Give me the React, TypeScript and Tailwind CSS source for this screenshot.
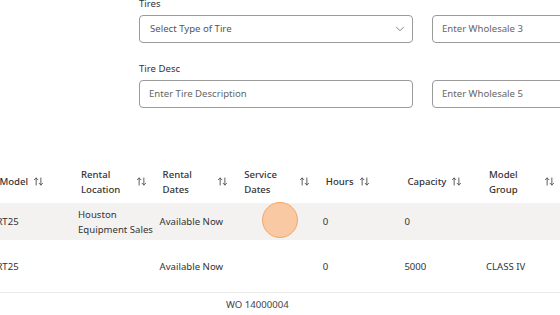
import { ChevronDown } from "lucide-react";

const cols = [
  { label: "Model" },
  { label: "Rental Location" },
  { label: "Rental Dates" },
  { label: "Service Dates" },
  { label: "Hours" },
  { label: "Capacity" },
  { label: "Model Group" },
];

const rows = [
  {
    cells: ["RT25", "Houston Equipment Sales", "Available Now", "", "0", "0", ""],
    className: "h-[37px] bg-[#f3f2f1]",
  },
  {
    cells: ["RT25", "", "Available Now", "", "0", "5000", "CLASS IV"],
    className: "h-[53px] border-b border-[#ebebeb]",
  },
];

function SortIcon() {
  return (
    <svg viewBox="0 0 14 14" className="w-[11px] h-[11px] shrink-0 text-[#555]" fill="none" stroke="currentColor" strokeWidth="1.2" strokeLinecap="round" strokeLinejoin="round">
      <path d="M4 2.5v9M1.8 4.7 4 2.5l2.2 2.2" />
      <path d="M10 2.5v9M7.8 9.3 10 11.5l2.2-2.2" />
    </svg>
  );
}

function Field({ label, children }: { label: string; children: React.ReactNode }) {
  return (
    <div className="flex flex-col">
      <div className="h-[15px] leading-[15px] mb-[4px] text-[#333]">{label}</div>
      {children}
    </div>
  );
}

function Input({ placeholder, width }: { placeholder: string; width: string }) {
  return (
    <div className={`${width} h-[28px] rounded-[4px] border border-[#9a9a9a] flex items-center pl-[9px] text-[#666]`}>
      {placeholder}
    </div>
  );
}

export default function App() {
  return (
    <div
      className="relative w-[560px] h-[315px] overflow-hidden bg-white text-[9.6px] text-[#333]"
      style={{ fontFamily: '"Noto Sans", "Open Sans", sans-serif' }}
    >
      <div className="-mt-[4px] pl-[139px] flex flex-col gap-[18px]">
        <div className="flex gap-[19px] items-end">
          <Field label="Tires">
            <div className="w-[274px] h-[28px] rounded-[4px] border border-[#9a9a9a] flex items-center justify-between pl-[10px] pr-[5px] text-[#555]">
              <span>Select Type of Tire</span>
              <ChevronDown className="w-[14px] h-[14px] text-[#666]" strokeWidth={1.4} />
            </div>
          </Field>
          <Input placeholder="Enter Wholesale 3" width="w-[200px] shrink-0" />
        </div>
        <div className="flex gap-[19px] items-end">
          <Field label="Tire Desc">
            <Input placeholder="Enter Tire Description" width="w-[274px]" />
          </Field>
          <Input placeholder="Enter Wholesale 5" width="w-[200px] shrink-0" />
        </div>
      </div>

      <div className="mt-[52px] -ml-[8.6px] w-[700px]">
        <div className="grid grid-cols-[repeat(7,81.6px)] h-[43px] items-center leading-[15px] font-medium">
          {cols.map((c) => (
            <div key={c.label} className="flex items-center gap-[5px] px-[8px]">
              <span>{c.label}</span>
              <SortIcon />
            </div>
          ))}
        </div>
        {rows.map((r, i) => (
          <div key={i} className={`grid grid-cols-[repeat(7,81.6px)] items-center leading-[15px] ${r.className}`}>
            {r.cells.map((c, j) => (
              <div key={j} className="pl-[5px] whitespace-normal">
                {c}
              </div>
            ))}
          </div>
        ))}
        <div className="h-[24px] flex items-center pl-[234.6px] text-[#444]">WO 14000004</div>
      </div>

      <div className="absolute left-[262px] top-[202px] w-[36px] h-[36px] rounded-full bg-[#f8c9a3] border-[1.5px] border-[#f5a762]" />
    </div>
  );
}
